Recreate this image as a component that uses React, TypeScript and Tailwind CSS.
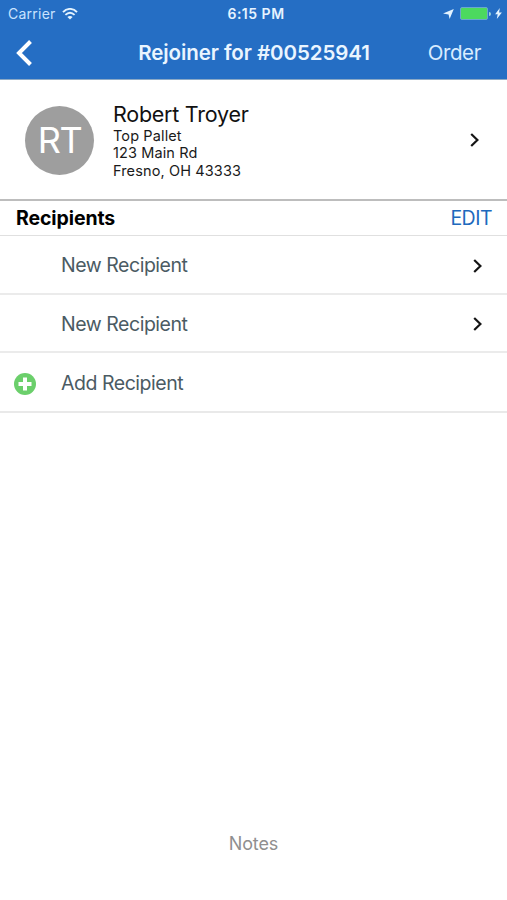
function Chevron() {
  return (
    <svg width="10" height="16" viewBox="0 0 10 16" fill="none" stroke="#151515" strokeWidth="2.2">
      <path d="M1.2 2 7.4 8 1.2 14" />
    </svg>
  );
}

function StatusBar() {
  return (
    <div className="relative flex h-[27px] items-center justify-between pl-[8px] pr-[5px]">
      <div className="flex items-center gap-[6px]">
        <span className="text-[14px] tracking-[0.25px] text-[#c9e3ff]">Carrier</span>
        {/* Wifi */}
        <svg width="16" height="12" viewBox="0 0 16 12" fill="none" stroke="#e3f3ff" strokeWidth="1.9">
          <path d="M1 4.2C5-.2 11-.2 15 4.2" />
          <path d="M3.4 6.9c2.8-2.7 6.4-2.7 9.2 0" />
          <path d="M8 11.6 5.4 9.1c1.5-1.4 3.7-1.4 5.2 0Z" fill="#e3f3ff" stroke="none" />
        </svg>
      </div>
      <span className="absolute inset-x-0 pb-px pl-[5px] text-center text-[14px] font-semibold tracking-[0.5px] text-[#e6f3ff]">
        6:15 PM
      </span>
      <div className="flex items-center">
        {/* Location */}
        <svg className="mr-[6px]" width="11" height="10" viewBox="0 0 11 10" fill="#e3f3ff">
          <path d="M10.8 0 6.6 10 5.6 5.4 0 4.6Z" />
        </svg>
        {/* Battery */}
        <div className="h-[13px] w-[28px] rounded-[2px] border border-[#6aa6d0] bg-[#4cd95f]" />
        <div className="ml-px mr-[4px] h-[4px] w-[2px] rounded-r-full bg-[#9ed3d8]" />
        <svg width="7" height="11" viewBox="0 0 7 11" fill="#e3f3ff">
          <path d="M4.8 0 .1 6.2h2.6L1.8 11 6.9 4.5H4.1Z" />
        </svg>
      </div>
    </div>
  );
}

function NavBar() {
  return (
    <div className="relative flex h-[52px] items-center justify-between pl-[16px] pr-[26px]">
      <svg width="17" height="26" viewBox="0 0 17 26" fill="none" stroke="#fff" strokeWidth="4">
        <path d="M14.5 1.5 3 13 14.5 24.5" />
      </svg>
      <h1 className="absolute inset-x-0 pl-px text-center text-[20.5px] font-semibold tracking-[-0.08px] text-[#eaf5ff]">
        Rejoiner for #00525941
      </h1>
      <button className="relative text-[20.5px] tracking-[-0.4px] text-[#d9ecff]">Order</button>
    </div>
  );
}

function Customer() {
  return (
    <section className="flex h-[121px] items-center border-b-2 border-[#bdbdbd] pl-[25px] pr-[27px] pt-px">
      <div className="flex size-[69px] items-center justify-center rounded-full bg-[#9e9e9e] text-[36px] tracking-[-1.5px] text-white">
        RT
      </div>
      <div className="ml-[19px] flex-1 text-[14.5px] leading-[17.5px] tracking-[0.12px] text-[#1a1a1a]">
        <h2 className="text-[21.5px] leading-[26px] tracking-[-0.25px] text-[#111]">Robert Troyer</h2>
        <p>Top Pallet</p>
        <p>123 Main Rd</p>
        <p>Fresno, OH 43333</p>
      </div>
      <Chevron />
    </section>
  );
}

export default function App() {
  return (
    <main className="flex h-[900px] w-[507px] flex-col bg-white font-['Inter',sans-serif]">
      <header className="h-[80px] border-b border-[#8ba9c6] bg-[#256ec4]">
        <StatusBar />
        <NavBar />
      </header>

      <Customer />

      <div className="flex h-[35px] items-center justify-between border-b border-[#e0e0e0] pl-[16px] pr-[15px] pt-[2px]">
        <h3 className="text-[19.5px] font-bold tracking-[-0.1px] text-black">Recipients</h3>
        <button className="text-[19.5px] tracking-[-0.5px] text-[#2069bd]">EDIT</button>
      </div>

      <ul className="text-[19.5px] tracking-[-0.47px] text-[#4b5b63]">
        {["New Recipient", "New Recipient"].map((label, i) => (
          <li
            key={i}
            className="flex h-[58.5px] items-center justify-between border-b-2 border-[#ebebeb] pl-[61px] pr-[24px] pt-[3px]"
          >
            {label}
            <Chevron />
          </li>
        ))}
        <li className="flex h-[60px] items-center border-b-2 border-[#e9e9e9] pl-[14px] pt-[3px]">
          <svg className="mr-[25px]" width="22" height="22" viewBox="0 0 22 22">
            <circle cx="11" cy="11" r="11" fill="#6bcf6b" />
            <path d="M11 4.5v13M4.5 11h13" stroke="#fff" strokeWidth="4" />
          </svg>
          Add Recipient
        </li>
      </ul>

      <footer className="mt-auto pb-[43px] text-center text-[18px] tracking-[-0.1px] text-[#8f8f8f]">Notes</footer>
    </main>
  );
}
